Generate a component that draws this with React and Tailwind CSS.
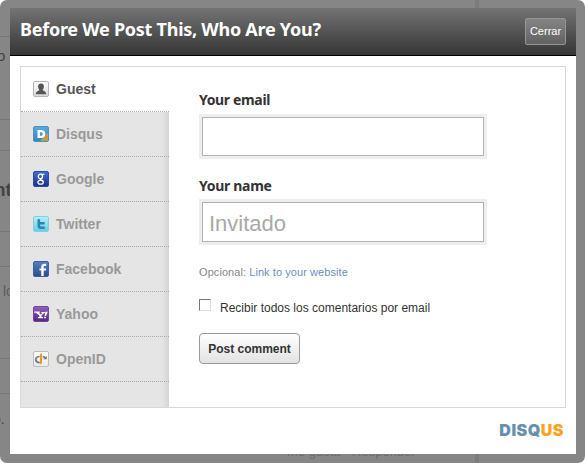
const services = [
  { name: "Guest", icon: <GuestIcon /> },
  { name: "Disqus", icon: <DisqusIcon /> },
  { name: "Google", icon: <GoogleIcon /> },
  { name: "Twitter", icon: <TwitterIcon /> },
  { name: "Facebook", icon: <FacebookIcon /> },
  { name: "Yahoo", icon: <YahooIcon /> },
  { name: "OpenID", icon: <OpenIdIcon /> },
]

function Tile({ id, from, to, stroke, children }) {
  return (
    <svg className="size-4 shrink-0" viewBox="0 0 16 16">
      <defs>
        <linearGradient id={id} x1="0" y1="0" x2="0" y2="1">
          <stop offset="0" stopColor={from} />
          <stop offset="1" stopColor={to} />
        </linearGradient>
      </defs>
      <rect x="0.5" y="0.5" width="15" height="15" rx="1.5" fill={`url(#${id})`} stroke={stroke} />
      {children}
    </svg>
  )
}

function GuestIcon() {
  return (
    <Tile id="guest" from="#ffffff" to="#d9d9d9" stroke="#b5b5b5">
      <path fill="#555" d="M8 2.500c2.200 0 3 1.300 2.900 3.200-.1 1.500-.6 2.300-1.100 2.800v.8c.6.700 3.200.9 3.500 3.900H2.700c.3-3 2.900-3.200 3.500-3.900v-.8c-.5-.5-1-1.300-1.100-2.800C5 3.800 5.800 2.500 8 2.500z" />
    </Tile>
  )
}

function DisqusIcon() {
  return (
    <Tile id="disqus" from="#58abe0" to="#3585bd" stroke="#4a92c4">
      <path fill="#c99b3f" d="M15 7v8H7z" />
      <path fill="#fff" fillRule="evenodd" d="M4.500 4h3.700c2.600 0 4.100 1.600 4.100 4s-1.500 4-4.100 4H4.500zM7 6.200v3.600h1c1.100 0 1.700-.7 1.700-1.800S9.100 6.200 8 6.200z" />
    </Tile>
  )
}

function GoogleIcon() {
  return (
    <Tile id="google" from="#3f6fd8" to="#1d2f86" stroke="#2c4aa5">
      <g fill="none" stroke="#fff" strokeWidth="1.300">
        <ellipse cx="7.400" cy="5.400" rx="2.100" ry="2.200" />
        <path d="M8 3.300h3.400M8 7.600c-2.200 1 1.100 1.200 2 2.500" />
        <ellipse cx="7.600" cy="11.300" rx="2.700" ry="1.900" />
      </g>
    </Tile>
  )
}

function TwitterIcon() {
  return (
    <Tile id="twitter" from="#b5f0f7" to="#62cde6" stroke="#83cfdf">
      <path fill="none" stroke="#2a86ad" strokeWidth="2.600" strokeLinecap="round" strokeLinejoin="round" d="M5.800 4.200v5.300c0 1.600.8 2.300 2.300 2.300h2.600M6 7.300h4.600" />
    </Tile>
  )
}

function FacebookIcon() {
  return (
    <Tile id="facebook" from="#5580bd" to="#2c4c8e" stroke="#3e619f">
      <path fill="#fff" d="M8.200 15V9.600H6.500V7.400h1.700V6c0-2.200 1.200-3.300 3.300-3.300h1.700v2.200h-1.300c-.9 0-1.200.4-1.200 1.200v1.300h2.500l-.3 2.200h-2.200V15z" />
    </Tile>
  )
}

function YahooIcon() {
  return (
    <Tile id="yahoo" from="#9561b5" to="#54248a" stroke="#74449b">
      <path fill="#fff" d="M1.200 5.500h5.600v1.200h-.9l1.700 1.700 1.700-1.300H8.300V6h3.900v1.100h-1.100L8.600 9.200v1.900h1.500v1.200H4.900v-1.200h1.400V9.300L2.900 6.700H1.200z" />
      <path fill="#fff" d="M12.400 5.800h2.400l-1.700 4.100h-1.500zM11.200 10.700h1.900v1.600h-1.900z" />
    </Tile>
  )
}

function OpenIdIcon() {
  return (
    <Tile id="openid" from="#ffffff" to="#e9e9e9" stroke="#bdbdbd">
      <path fill="none" stroke="#777" strokeWidth="1.700" d="M6.600 5.500C3.500 5.600 2.600 7.200 2.800 8.800c.2 1.700 1.600 2.700 3.900 2.900M9.700 5.700c1.200.1 2.200.6 2.900 1.300" />
      <path fill="#777" d="M13.800 4.900v3.400h-3.500z" />
      <path fill="#ef9421" d="M7 3.200 9 2v10.300l-2 1.300z" />
    </Tile>
  )
}

// Dimmed comment thread that shows around the dialog
function Backdrop() {
  return (
    <div className="flex h-full text-[#444]">
      <div className="flex w-[479px] flex-col border-r-4 border-[#7c7c7c]">
        <div className="h-[37px] shrink-0 border-b border-[#767676]" />
        <div className="h-[83px] shrink-0 border-b border-[#767676] pt-[9px] text-[15px] leading-5">
          <span className="-ml-[3px]">o c</span>
        </div>
        <div className="h-[31px] shrink-0 border-b border-[#767676]" />
        <div className="h-[81px] shrink-0 border-b border-[#767676] pt-[25px] text-[19px] font-bold leading-7">
          <span className="-ml-[6px]">nt</span>
        </div>
        <div className="h-[35px] shrink-0 border-b border-[#767676]" />
        <div className="h-[92px] shrink-0 border-b border-[#767676] pl-[3px] pt-[14px] text-[14px] leading-5 text-[#5c5c5c]">lo</div>
        <div className="h-[35px] shrink-0 border-b border-[#767676]" />
        <div className="h-[49px] shrink-0 pt-[15px] text-[14px] leading-5">
          <span className="-ml-[7px]">o.</span>
        </div>
        <div className="-mt-[1px] pl-[287px] text-[13px] leading-5 text-[#6e6e6e]">Me gusta · Responder</div>
      </div>
    </div>
  )
}

export default function App() {
  return (
    <div className="relative h-[463px] w-[585px] overflow-hidden bg-white font-['Liberation_Sans',Arial,sans-serif]">
      <div className="h-full overflow-hidden rounded-[7px] bg-[#868686]">
        <Backdrop />
      </div>

      <div className="absolute left-[10px] top-2 flex h-[446px] w-[566px] flex-col bg-white">
        <div className="flex h-12 shrink-0 items-center justify-between border-b border-black bg-linear-to-b from-[#747474] to-[#363636] px-[10px]">
          <h1 className="-mt-[4px] whitespace-nowrap font-['Noto_Sans',sans-serif] text-[18px] font-bold tracking-[-0.26px] text-white">
            Before We Post This, Who Are You?
          </h1>
          <button className="h-[27px] w-[41px] rounded-[2px] border border-[#959595] bg-linear-to-b from-[#858585] to-[#626262] pb-px text-[11px] text-white">
            Cerrar
          </button>
        </div>

        <div className="mx-[10px] mt-[10px] flex h-[342px] w-[546px] border border-[#d8d8d8]">
          <div className="flex w-[148px] shrink-0 flex-col bg-linear-to-r from-[#e5e5e5] from-95% to-[#d5d5d5]">
            {services.map((service, i) => (
              <div
                key={service.name}
                className={
                  "flex h-[45px] shrink-0 items-center gap-[7px] border-b border-dotted border-[#aaa] pl-3 text-[14px] font-bold " +
                  (i === 0 ? "bg-white text-[#555]" : "text-[#999]")
                }
              >
                {service.icon}
                <span>{service.name}</span>
              </div>
            ))}
          </div>

          <div className="flex flex-col items-start pl-[30px] pt-[23px]">
            <label>
              <span className="block font-['Noto_Sans',sans-serif] text-[14px] font-bold leading-5 tracking-[-0.35px] text-[#333]">Your email</span>
              <span className="mt-1 block w-[288px] bg-[#eee] p-[3px]">
                <input type="text" className="block h-[39px] w-full border border-[#b3b3b3] bg-white px-[6px] text-[22px] outline-none" />
              </span>
            </label>
            <label className="mt-[17px]">
              <span className="block font-['Noto_Sans',sans-serif] text-[14px] font-bold leading-5 tracking-[-0.3px] text-[#333]">Your name</span>
              <span className="mt-[3px] block w-[288px] bg-[#eee] p-[3px]">
                <input
                  type="text"
                  placeholder="Invitado"
                  className="block h-10 w-full border border-[#b3b3b3] bg-white px-[6px] pt-[4px] text-[22px] outline-none placeholder:text-[#a9a9a9]"
                />
              </span>
            </label>
            <p className="mt-[19px] text-[11px] leading-4 tracking-[0.07px] text-[#888]">
              Opcional: <a className="text-[#6a8fb8]">Link to your website</a>
            </p>
            <label className="mt-[18px] flex items-start text-[12px] leading-4 text-[#333]">
              <span className="mr-[9px] mt-px size-3 border border-b-[#ddd] border-l-[#777] border-r-[#ddd] border-t-[#777] bg-white" />
              <span className="mt-[2px]">Recibir todos los comentarios por email</span>
            </label>
            <button className="mt-[17px] h-[31px] w-[101px] rounded-[4px] border border-[#999] bg-linear-to-b from-white to-[#e2e2e2] text-[12px] font-bold text-[#333]">
              Post comment
            </button>
          </div>
        </div>

        <div className="flex justify-end pr-3 pt-3 font-['Inter',sans-serif] text-[16px] font-black leading-5 tracking-[0.5px]">
          <span className="text-[#6590ae]">DISQ</span>
          <span className="text-[#fba31b]">US</span>
        </div>
      </div>
    </div>
  )
}
